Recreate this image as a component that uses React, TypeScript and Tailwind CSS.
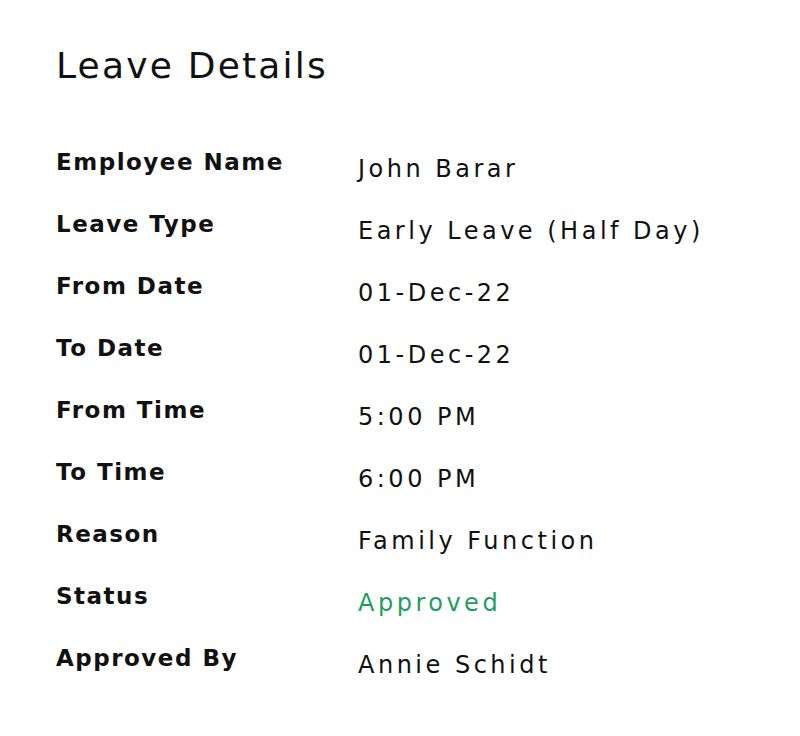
import React from "react";

const rows: { label: string; value: string; green?: boolean }[] = [
  { label: "Employee Name", value: "John Barar" },
  { label: "Leave Type", value: "Early Leave (Half Day)" },
  { label: "From Date", value: "01-Dec-22" },
  { label: "To Date", value: "01-Dec-22" },
  { label: "From Time", value: "5:00 PM" },
  { label: "To Time", value: "6:00 PM" },
  { label: "Reason", value: "Family Function" },
  { label: "Status", value: "Approved", green: true },
  { label: "Approved By", value: "Annie Schidt" },
];

export default function App() {
  return (
    <div className="w-[800px] h-[736px] bg-white px-14 pt-[42px] font-['DejaVu_Sans',sans-serif]">
      <h1 className="text-[36px] leading-[48px] font-normal tracking-[2.2px] text-[#111]">
        Leave Details
      </h1>

      <div className="mt-[57px] flex flex-col">
        {rows.map((r) => (
          <div key={r.label} className="flex h-[62px] items-start">
            <div className="w-[302px] text-[23px] leading-[30px] font-bold tracking-[1.5px] text-[#111]">
              {r.label}
            </div>
            <div
              className={`pt-[7px] text-[24px] leading-[30px] tracking-[3.5px] ${
                r.green ? "text-[#1f9d5f]" : "text-[#111]"
              }`}
            >
              {r.value}
            </div>
          </div>
        ))}
      </div>
    </div>
  );
}
